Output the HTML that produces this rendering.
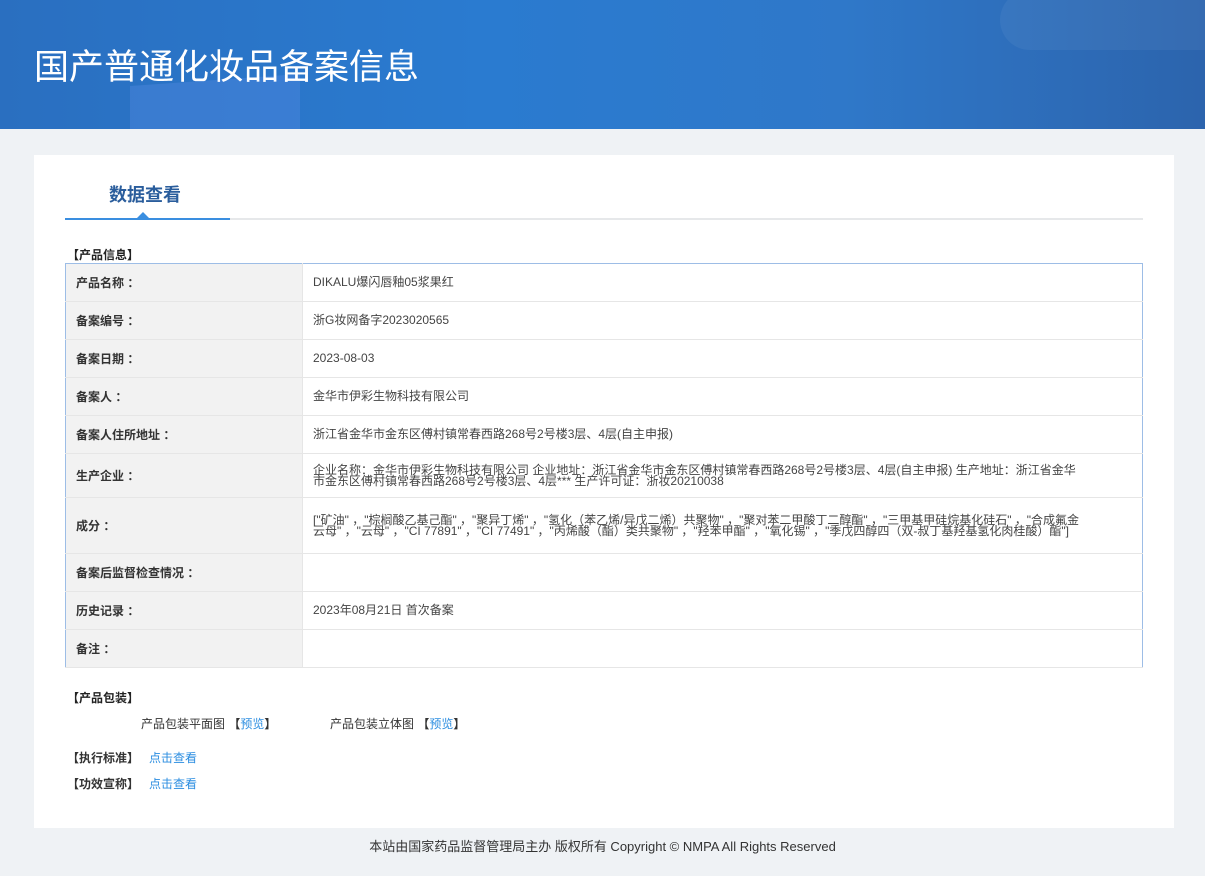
<!DOCTYPE html>
<html><head><meta charset="utf-8"><style>
*{margin:0;padding:0;box-sizing:border-box}
body{width:1205px;height:876px;background:#eff2f5;font-family:"Liberation Sans","Noto Sans CJK SC",sans-serif;color:#333;font-size:12px;overflow:hidden;position:relative}
.hd{position:absolute;left:0;top:0;width:1205px;height:129px;background:linear-gradient(90deg,#2a6fc0 0%,#2a7bd0 40%,#2f78c9 70%,#2c64ad 100%);overflow:hidden}
.hd .s1{position:absolute;left:130px;top:80px;width:170px;height:60px;background:rgba(90,140,230,.35);transform:skewY(-4deg)}
.hd .s2{position:absolute;left:1000px;top:-10px;width:260px;height:60px;border-radius:40px;background:rgba(255,255,255,.05)}
.hd h1{position:absolute;left:34px;top:39px;font-size:35px;font-weight:normal;color:#fff;letter-spacing:0}
.card{position:absolute;left:34px;top:155px;width:1140px;height:673px;background:#fff}
.tab{position:absolute;left:75px;top:26px;font-size:18px;font-weight:bold;color:#2a5d9c}
.line{position:absolute;left:31px;top:63px;width:1078px;height:2px;background:#e6e8ea}
.line2{position:absolute;left:31px;top:63px;width:165px;height:2px;background:#3a8ee0}
.tri{position:absolute;left:103px;top:57px;width:0;height:0;border-left:6px solid transparent;border-right:6px solid transparent;border-bottom:6px solid #3a8ee0}
.sec{position:absolute;font-weight:bold;font-size:12px;color:#222}
table{position:absolute;left:31px;top:108px;width:1078px;border-collapse:collapse;border:1px solid #9dbde6}
td{border-bottom:1px solid #e6e6e6;font-size:12px;vertical-align:middle}
td.l{width:237px;background:#f2f2f2;font-weight:bold;padding-left:10px;border-right:1px solid #e6e6e6}
td.v{padding-left:10px;padding-right:60px;line-height:11px;color:#444}
a{color:#2b8de0;text-decoration:none}
.ft{position:absolute;top:836px;left:0;width:1205px;text-align:center;font-size:13px;color:#333}
</style></head><body>
<div class="hd"><div class="s1"></div><div class="s2"></div><h1>国产普通化妆品备案信息</h1></div>
<div class="card">
<div class="tab">数据查看</div>
<div class="line"></div><div class="line2"></div><div class="tri"></div>
<div class="sec" style="left:33px;top:91px">【产品信息】</div>
<table>
<tr style="height:38px"><td class="l">产品名称 ：</td><td class="v">DIKALU爆闪唇釉05浆果红</td></tr>
<tr style="height:38px"><td class="l">备案编号 ：</td><td class="v">浙G妆网备字2023020565</td></tr>
<tr style="height:38px"><td class="l">备案日期 ：</td><td class="v">2023-08-03</td></tr>
<tr style="height:38px"><td class="l">备案人 ：</td><td class="v">金华市伊彩生物科技有限公司</td></tr>
<tr style="height:38px"><td class="l">备案人住所地址 ：</td><td class="v">浙江省金华市金东区傅村镇常春西路268号2号楼3层、4层(自主申报)</td></tr>
<tr style="height:44px"><td class="l">生产企业 ：</td><td class="v">企业名称：金华市伊彩生物科技有限公司 企业地址：浙江省金华市金东区傅村镇常春西路268号2号楼3层、4层(自主申报) 生产地址：浙江省金华市金东区傅村镇常春西路268号2号楼3层、4层*** 生产许可证：浙妆20210038</td></tr>
<tr style="height:56px"><td class="l">成分 ：</td><td class="v">["矿油" ，"棕榈酸乙基己酯" ，"聚异丁烯" ，"氢化（苯乙烯/异戊二烯）共聚物" ，"聚对苯二甲酸丁二醇酯" ，"三甲基甲硅烷基化硅石" ，"合成氟金云母" ，"云母" ，"CI 77891" ，"CI 77491" ，"丙烯酸（酯）类共聚物" ，"羟苯甲酯" ，"氧化锡" ，"季戊四醇四（双-叔丁基羟基氢化肉桂酸）酯"]</td></tr>
<tr style="height:38px"><td class="l">备案后监督检查情况 ：</td><td class="v"></td></tr>
<tr style="height:38px"><td class="l">历史记录 ：</td><td class="v">2023年08月21日 首次备案</td></tr>
<tr style="height:38px"><td class="l">备注 ：</td><td class="v"></td></tr>
</table>
<div class="sec" style="left:33px;top:534px">【产品包装】</div>
<div style="position:absolute;left:107px;top:560px">产品包装平面图 <b>【</b><a>预览</a><b>】</b></div>
<div style="position:absolute;left:296px;top:560px">产品包装立体图 <b>【</b><a>预览</a><b>】</b></div>
<div style="position:absolute;left:33px;top:594px"><b>【执行标准】</b>&nbsp;&nbsp;&nbsp;<a>点击查看</a></div>
<div style="position:absolute;left:33px;top:620px"><b>【功效宣称】</b>&nbsp;&nbsp;&nbsp;<a>点击查看</a></div>
</div>
<div class="ft">本站由国家药品监督管理局主办 版权所有 Copyright © NMPA All Rights Reserved</div>
</body></html>
